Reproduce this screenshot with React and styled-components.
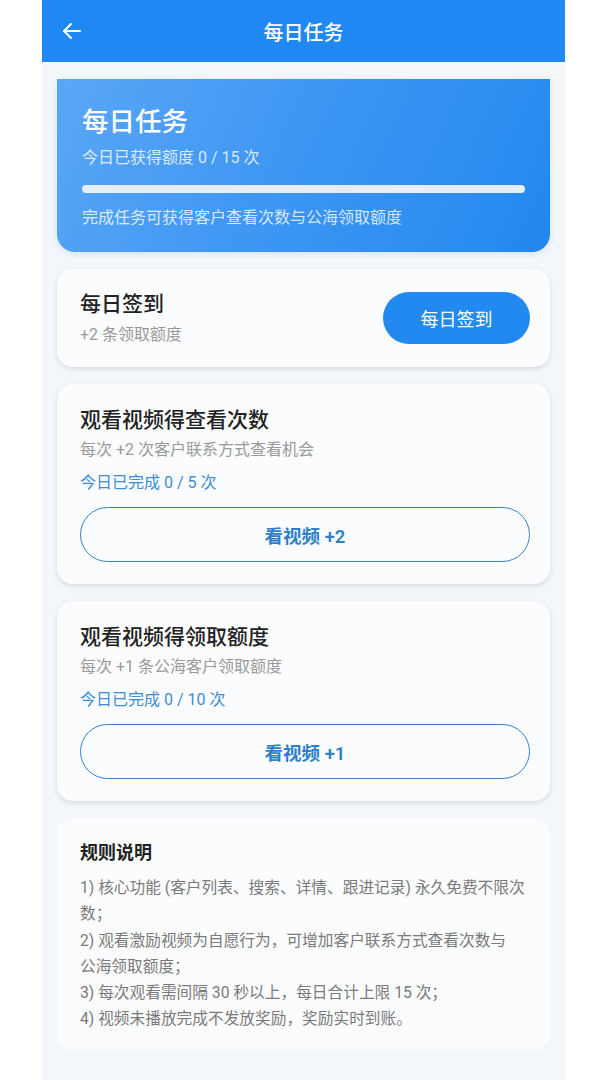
import styled, { createGlobalStyle } from 'styled-components';

const GlobalStyle = createGlobalStyle`
    body {
        margin: 0;
        background: #ffffff;
        font-family: Roboto, "Noto Sans CJK SC", "Noto Sans", sans-serif;
    }
`;

const Page = styled.div`
    width: 523px;
    margin: 0 auto;
    background: #f3f6fa;
    padding-bottom: 29px;
`;

const Header = styled.header`
    height: 62px;
    background: #1f88f2;
    display: grid;
    grid-template-columns: 1fr auto 1fr;
    align-items: center;
    padding: 0 20px;
`;

const BackButton = styled.button`
    justify-self: start;
    border: none;
    background: none;
    padding: 0;
    display: flex;
    color: #ffffff;
`;

const HeaderTitle = styled.h1`
    margin: 0;
    font-size: 20px;
    font-weight: 500;
    color: #ffffff;
`;

const Content = styled.main`
    display: flex;
    flex-direction: column;
    gap: 17px;
    padding: 17px 15px 0;
`;

const Hero = styled.section`
    background: linear-gradient(115deg, #5aa7f6 0%, #3f97f3 45%, #2188ef 100%);
    border-radius: 0 0 18px 18px;
    padding: 26px 25px 24px;
    color: #ffffff;
    box-shadow: 0 2px 6px rgba(33, 136, 239, 0.15);
`;

const HeroTitle = styled.h2`
    margin: 0;
    font-size: 26.5px;
    line-height: 34px;
    font-weight: 500;
`;

const HeroText = styled.p`
    margin: ${(p) => p.$top}px 0 0;
    font-size: 16px;
    line-height: 20px;
    color: rgba(255, 255, 255, 0.8);
`;

const Track = styled.div`
    margin-top: 17px;
    height: 8px;
    border-radius: 4px;
    background: #e6edf5;
    overflow: hidden;
`;

const Fill = styled.div`
    height: 100%;
    background: #ffffff;
`;

const Card = styled.section`
    background: #fbfcfd;
    border-radius: 16px;
    padding: ${(p) => (p.$row ? '0 20px 0 23px' : '22px 20px 22px 23px')};
    min-height: ${(p) => (p.$row ? '98px' : 'auto')};
    display: flex;
    flex-direction: ${(p) => (p.$row ? 'row' : 'column')};
    align-items: ${(p) => (p.$row ? 'center' : 'stretch')};
    justify-content: space-between;
    box-shadow: ${(p) => (p.$flat ? 'none' : '0 2px 5px rgba(30, 50, 80, 0.13)')};
`;

const TextBlock = styled.div`
    display: flex;
    flex-direction: column;
`;

const CardTitle = styled.h3`
    margin: 0;
    font-size: 21px;
    line-height: 28px;
    font-weight: 500;
    color: #222222;
`;

const Sub = styled.p`
    margin: ${(p) => p.$top || 5}px 0 0;
    font-size: 16px;
    line-height: 22px;
    color: #9a9a9a;
`;

const Progress = styled.p`
    margin: 11px 0 0;
    font-size: 16px;
    line-height: 22px;
    color: #3d8cd6;
`;

const SolidButton = styled.button`
    width: 147px;
    height: 52px;
    border: none;
    border-radius: 26px;
    background: #2189ef;
    color: #ffffff;
    font-family: inherit;
    font-size: 18px;
`;

const OutlineButton = styled.button`
    margin-top: 13px;
    height: 55px;
    border: 1.6px solid #3482cb;
    border-radius: 28px;
    background: transparent;
    color: #2f7fc8;
    font-family: inherit;
    font-size: 18.5px;
    font-weight: 600;
`;

const RulesTitle = styled.h3`
    margin: 0;
    font-size: 18px;
    line-height: 26px;
    font-weight: 700;
    color: #222222;
`;

const RulesList = styled.div`
    margin-top: 9px;
    margin-bottom: -4px;
    font-size: 15.7px;
    line-height: 26.3px;
    color: #7a7a7a;
`;

const RuleLine = styled.span`
    display: block;
    white-space: nowrap;
`;

const BackArrow = () => (
    <svg width="20" height="20" viewBox="0 0 20 20" fill="none" stroke="currentColor" strokeWidth="2" strokeLinecap="round" strokeLinejoin="round">
        <path d="M18 10H2" />
        <path d="M9 3 2 10l7 7" />
    </svg>
);

const videoTasks = [
    { title: '观看视频得查看次数', desc: '每次 +2 次客户联系方式查看机会', done: 0, total: 5, label: '看视频 +2' },
    { title: '观看视频得领取额度', desc: '每次 +1 条公海客户领取额度', done: 0, total: 10, label: '看视频 +1' },
];

// each rule split the way it wraps on the device
const rules = [
    ['1) 核心功能 (客户列表、搜索、详情、跟进记录) 永久免费不限次', '数；'],
    ['2) 观看激励视频为自愿行为，可增加客户联系方式查看次数与', '公海领取额度；'],
    ['3) 每次观看需间隔 30 秒以上，每日合计上限 15 次；'],
    ['4) 视频未播放完成不发放奖励，奖励实时到账。'],
];

export default function App() {
    const earned = 0;
    const limit = 15;
    return (
        <>
            <GlobalStyle />
            <Page>
                <Header>
                    <BackButton aria-label="返回"><BackArrow /></BackButton>
                    <HeaderTitle>每日任务</HeaderTitle>
                </Header>
                <Content>
                    <Hero>
                        <HeroTitle>每日任务</HeroTitle>
                        <HeroText $top={9}>今日已获得额度 {earned} / {limit} 次</HeroText>
                        <Track>
                            <Fill style={{ width: `${(earned / limit) * 100}%` }} />
                        </Track>
                        <HeroText $top={15}>完成任务可获得客户查看次数与公海领取额度</HeroText>
                    </Hero>

                    <Card $row>
                        <TextBlock>
                            <CardTitle>每日签到</CardTitle>
                            <Sub $top={6}>+2 条领取额度</Sub>
                        </TextBlock>
                        <SolidButton>每日签到</SolidButton>
                    </Card>

                    {videoTasks.map((t) => (
                        <Card key={t.title}>
                            <CardTitle>{t.title}</CardTitle>
                            <Sub>{t.desc}</Sub>
                            <Progress>今日已完成 {t.done} / {t.total} 次</Progress>
                            <OutlineButton>{t.label}</OutlineButton>
                        </Card>
                    ))}

                    <Card $flat>
                        <RulesTitle>规则说明</RulesTitle>
                        <RulesList>
                            {rules.map((lines) =>
                                lines.map((l) => <RuleLine key={l}>{l}</RuleLine>)
                            )}
                        </RulesList>
                    </Card>
                </Content>
            </Page>
        </>
    );
}
